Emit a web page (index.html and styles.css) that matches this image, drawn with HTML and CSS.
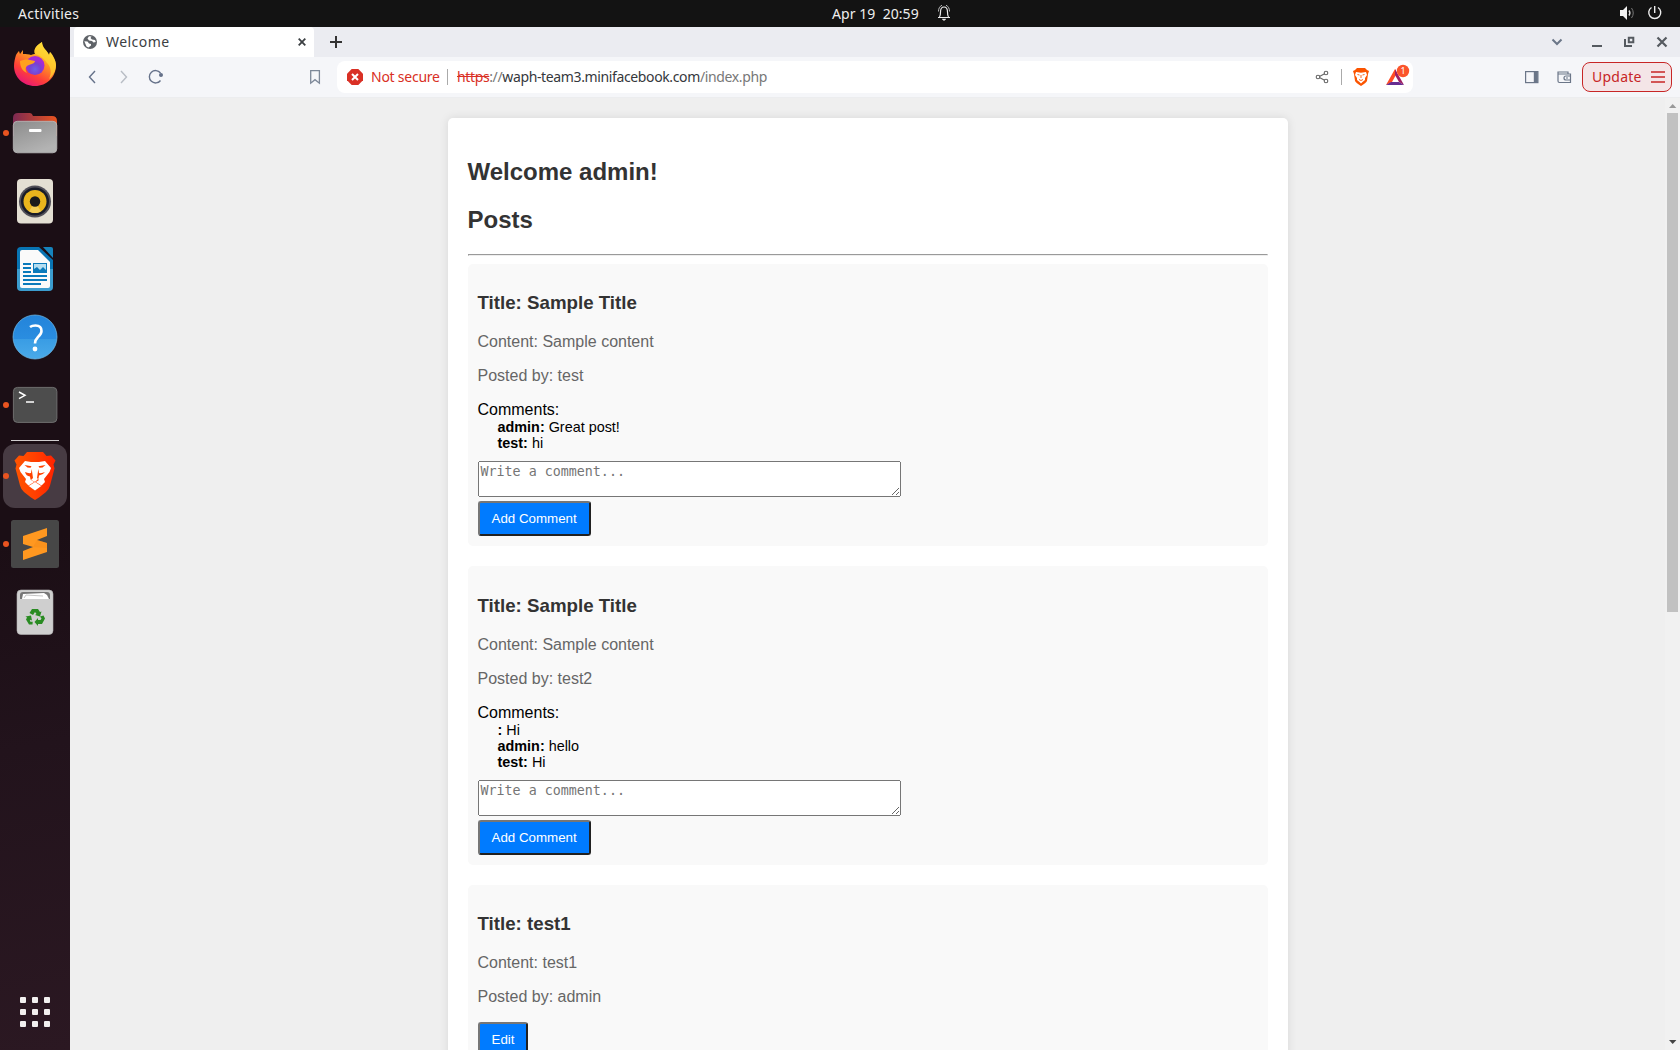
FILE: index.html
```html
<!DOCTYPE html>
<html lang="en">
<head>
<meta charset="utf-8">
<title>Welcome</title>
<link rel="stylesheet" href="styles.css">
</head>
<body>
<header class="topbar">
  <span class="activities">Activities</span>
  <span class="clock">Apr 19&nbsp; 20:59</span>
  <svg class="bell" viewBox="936 4 16 18" width="16" height="18" fill="none" stroke="#eee"><path d="M938 17.500h12M939.500 17q1-1.500 1-5c0-3.500 1.300-5 3.500-5s3.500 1.500 3.500 5q0 3.500 1 5" stroke-width="1.200"/><path d="M938.500 11.500c0-3 1-5 3.500-6.300M949.500 11.500c0-3-1-5-3.500-6.300" stroke="#bbb"/><path d="M942.500 19.300h3l-1.500 1z" fill="#eee"/></svg>
  <svg class="status" viewBox="1618 4 50 18" width="50" height="18" fill="none"><path d="M1620 10h3l4-4v14l-4-4h-3z" fill="#f2f2f2"/><path d="M1629 10.500q1.800 2.500 0 5" stroke="#ddd" stroke-width="1.400"/><path d="M1631.500 8q3.500 5 0 10" stroke="#777"/><path d="M1651.500 7.500a6 6 0 1 0 6.500 0M1654.700 6v7" stroke="#eee" stroke-width="1.400"/></svg>
</header>
<div class="desktop">
  <nav class="dock">
    <svg class="app" viewBox="0 31 70 68">
      <defs>
        <linearGradient id="fx" x1=".8" y1="0" x2=".25" y2="1"><stop offset="0" stop-color="#fff44f"/><stop offset=".4" stop-color="#ff9a22"/><stop offset=".72" stop-color="#ff4038"/><stop offset="1" stop-color="#e5127d"/></linearGradient>
        <radialGradient id="fxg" cx=".5" cy=".7"><stop offset="0" stop-color="#6c60e8"/><stop offset=".6" stop-color="#7a40d0"/><stop offset="1" stop-color="#a52bd5"/></radialGradient>
      </defs>
      <path d="M16 55c1-2 2-3 3-4l1 3 3-4v4c3 0 6 0 8 1 2-1 3-1 4-1-2-5 2-9 7-12 0 6 5 8 7 13l1-3c3 3 6 9 6 13 0 12-9 21-21 21S14 77 14 66c0-4 1-8 2-11z" fill="url(#fx)"/>
      <path d="M42 42c0 6 5 8 7 13l1-3c3 3 6 9 6 13 0 5-3 11-7 14 3-6 2-12-2-16-3-5-8-8-12-9-2-5 2-9 7-12z" fill="#ffd930" fill-opacity=".7"/>
      <circle cx="35" cy="65.500" r="9.500" fill="url(#fxg)"/>
      <path d="M20 61c3-1 7-2 10-1l5 1c0 2-3 3-6 4-4 1-4 5-2 8-5-2-7-7-7-12z" fill="#ffa01e"/>
    </svg>
    <svg class="app" viewBox="0 99 70 68">
      <defs><linearGradient id="fa"><stop offset="0" stop-color="#7d2952"/><stop offset="1" stop-color="#e95420"/></linearGradient><linearGradient id="fb" x2=".5" y2="1"><stop offset="0" stop-color="#8c8c8c"/><stop offset="1" stop-color="#b3b3b3"/></linearGradient></defs>
      <path d="M13 118q0-5 5-5h12q2 0 3 3h19q5 0 5 5v15H13z" fill="url(#fa)"/><rect x="13.300" y="121.300" width="43.500" height="31.500" rx="4" fill="url(#fb)" stroke="#bbb" stroke-width=".8"/><rect x="29" y="129" width="12.500" height="3" rx="1" fill="#fff"/><circle cx="6" cy="133" r="3" fill="#e95420"/>
    </svg>
    <svg class="app" viewBox="0 167 70 68">
      <rect x="17" y="179" width="36" height="44.500" rx="4" fill="#e4dfd3"/><circle cx="35" cy="201.500" r="16" fill="#514f58"/><circle cx="35" cy="201.500" r="14" fill="#191c29"/><circle cx="35" cy="201.500" r="11.500" fill="#eab51d"/><path d="M35 201.500l-6 10q6 3 12 0z" fill="#f8df80" opacity=".6"/><circle cx="35" cy="201.500" r="5.200" fill="#1b1b1b"/>
    </svg>
    <svg class="app" viewBox="0 235 70 68">
      <defs><linearGradient id="wr" x2="0" y2="1"><stop offset=".5" stop-color="#0874b3"/><stop offset=".5" stop-color="#3b9cce"/></linearGradient></defs>
      <path d="M17 251q0-4 4-4h18l14 13v27q0 4-4 4H21q-4 0-4-4z" fill="url(#wr)"/><path d="M20 252q0-2 2-2h16l12 12v24q0 2-2 2H22q-2 0-2-2z" fill="#fafafa"/><path d="M43 247h8q2 0 2 2v9z" fill="#1684bd"/><path d="M23 264h8M23 268h8M23 272h8M23 276h24M23 280h24M23 284h18" stroke="#0a7abb" stroke-width="2"/><rect x="33.500" y="263.500" width="13" height="9" fill="#b5def1" stroke="#0a7abb"/><path d="M34 272v-3l3-2 3 3 3-3 3 3v2z" fill="#0a7abb"/>
    </svg>
    <svg class="app" viewBox="0 303 70 68">
      <defs><linearGradient id="hp" x2="0" y2="1"><stop offset="0" stop-color="#2384da"/><stop offset=".54" stop-color="#2a8de0"/><stop offset=".54" stop-color="#399ce4"/><stop offset="1" stop-color="#4aaae9"/></linearGradient></defs>
      <circle cx="35" cy="337" r="22" fill="url(#hp)" stroke="#71bdeb" stroke-width=".7"/><path d="M30 327q2-1.500 5.500-1.500 6 0 6 5.500 0 3-3.500 6-3 3-3 6.500" fill="none" stroke="#fff" stroke-width="2.600"/><circle cx="35" cy="349" r="2.400" fill="#fff"/>
    </svg>
    <svg class="app" viewBox="0 371 70 68">
      <rect x="13.400" y="387.400" width="43.500" height="35" rx="4" fill="#4d4d4d" stroke="#747474" stroke-width=".9"/><path d="M19 392l6 3.300-6 3.300M26 402h8" fill="none" stroke="#fff" stroke-width="1.500"/><circle cx="6" cy="405" r="3" fill="#e95420"/>
    </svg>
    <div class="separator"></div>
    <svg class="app" viewBox="0 442 70 68">
      <defs><linearGradient id="br"><stop offset="0" stop-color="#ff5500"/><stop offset=".5" stop-color="#ff4000"/><stop offset="1" stop-color="#ff2200"/></linearGradient></defs>
      <rect x="3" y="444" width="64" height="64" rx="12" fill="#473b43"/>
      <path d="M27 452h16l3.500 4 4.500-.5 4.500 5-2 4 1 4-4.500 17q-1 4-4 6.500l-7 5.500-4 2.500-4-2.500-7-5.500q-3-2.500-4-6.500l-4.500-17 1-4-2-4 4.500-5 4.500.5z" fill="url(#br)"/>
      <path d="M25 461l6 1h8l6-1 6 7-1.500 4-5.500 7 1 3-3.500 3.500-6.500-4-6.500 4-3.500-3.500 1-3-5.500-7L19 468z" fill="#fff"/>
      <path d="M24.500 465l7 1.300-1 1.500-3-.3zM45.500 465l-7 1.300 1 1.500 3-.3zM25 472q3 1.500 6 1l.7-4 1.300 9-2 2 4 2.500 4-2.500-2-2 1.300-9 .7 4q3 .5 6-1-2 3-6 3.500l-.5 3L35 482l-4.500-2.500-.500-3q-4-.5-5-4.500z" fill="#ff4200"/>
      <path d="M35 482l6.300 4-6.300 4.500-6.300-4.500z" fill="#fff"/><circle cx="6" cy="476" r="3" fill="#e95420"/>
    </svg>
    <svg class="app" viewBox="0 510 70 68">
      <rect x="11" y="520" width="48" height="48" rx="2.500" fill="#474747"/><path d="M47 528v8l-10 4 10 3v9l-24 8v-9l10-4-10-3v-8z" fill="#ff9820"/><path d="M33 547l4-7 10 3v5z" fill="#ef8514" opacity=".3"/><circle cx="6" cy="544" r="3" fill="#e95420"/>
    </svg>
    <svg class="app" viewBox="0 578 70 68">
      <rect x="17" y="590" width="36" height="44.500" rx="4" fill="#cfcfcf" stroke="#b4b4b4" stroke-width=".6"/><path d="M20 599v-4q0-3 3-3h24q3 0 3 3v4z" fill="#777"/><path d="M22 599l1-5 21-1 3 2 2 4z" fill="#fff"/><path d="M24 598l2-3 17 1" fill="none" stroke="#aaa" stroke-width=".7"/>
      <g fill="#298b22"><path d="M32 609h6l2 3 1.500-.5-1.500 5-5-1.500 1.500-1-1.500-2-2 3-3.500-2z"/><path d="M43.500 615.500l1.500 3-3 5.500h-4v2l-3.500-4 3.500-4v2h2.500l1-1.500-1.500-2z"/><path d="M32.500 624.500h-3.500l-3-5 1-2-1.500-1 5.500-1 1 5-1.500-.8-.7 1 .7 1h2.200z"/></g>
    </svg>
    <svg class="launcher" viewBox="20 997 30 30" fill="#f2f0ef"><g id="dots"><rect x="20" y="997" width="6" height="6" rx="1"/><rect x="32" y="997" width="6" height="6" rx="1"/><rect x="44" y="997" width="6" height="6" rx="1"/></g><use href="#dots" y="12"/><use href="#dots" y="24"/></svg>
  </nav>
  <main class="browser">
    <div class="tabs">
      <div class="tab">
        <svg class="globe" viewBox="0 0 14 14"><circle cx="7" cy="7" r="7" fill="#5f6368"/><path d="M1.300 6.200l3.200.3 1.500 2 2 .5v1.500l-2.500 2-2-1zM6 1.300l2.500.2-1 1.500 1.500 1.500 3 .500.800 2-2.300.5-1.500-1.500-3-.500-1.500-2z" fill="#fff"/></svg>
        <span class="tab-title">Welcome</span>
        <svg class="tab-close" viewBox="0 0 8 8" stroke="#3c4043" stroke-width="1.800"><path d="M.7.7l6.600 6.600M7.300.7L.7 7.300"/></svg>
      </div>
      <svg class="plus" viewBox="0 0 12 12" stroke="#333" stroke-width="2"><path d="M6 0v12M0 6h12"/></svg>
      <svg class="window-buttons" viewBox="1550 34 120 16" fill="none"><path d="M1552.500 39.500l4.500 4.500 4.500-4.500" stroke="#6b7688" stroke-width="2"/><path d="M1592 46h10" stroke="#555a60" stroke-width="2"/><path d="M1625 39v7h7M1628.800 37.800h4.500v4.500h-4.500z" stroke="#555a60" stroke-width="2"/><path d="M1657.500 37.500l9 9M1666.500 37.500l-9 9" stroke="#555a60" stroke-width="2.200"/></svg>
    </div>
    <div class="toolbar">
      <svg class="nav-icons" viewBox="86 67 80 20" fill="none" stroke="#66728a" stroke-width="1.400"><path d="M95 71l-5.500 6 5.500 6"/><path d="M121 71l5.500 6-5.500 6" stroke="#b8bdc5"/><path d="M160.500 80.500a6.200 6.200 0 1 1 0-7.500"/><circle cx="161" cy="75" r="1.300" fill="#66728a"/></svg>
      <svg class="bookmark" viewBox="309 69 12 16" fill="none" stroke="#7d8898" stroke-width="1.300"><path d="M310.700 70.700h8.700v12.500l-4.400-3.500-4.300 3.500z"/></svg>
      <div class="address">
        <svg class="danger" viewBox="0 0 16 16"><path d="M4.700 0h6.600L16 4.700v6.600L11.300 16H4.700L0 11.300V4.700z" fill="#d93025"/><path d="M5 5l6 6M11 5l-6 6" stroke="#fff" stroke-width="2"/></svg>
        <span class="insecure">Not secure</span>
        <span class="bar"></span>
        <span class="url"><s>https</s><i>://</i>waph-team3.minifacebook.com<i>/index.php</i></span>
        <svg class="address-icons" viewBox="1314 62 96 30" fill="none">
          <g stroke="#666" stroke-width="1.100"><path d="M1318.500 77l7.500-4M1318.500 77l7.500 4"/><g fill="#fff"><circle cx="1318" cy="77" r="1.800"/><circle cx="1326" cy="73" r="1.800"/><circle cx="1326" cy="81" r="1.800"/></g></g>
          <path d="M1341.500 69v16" stroke="#aaa"/>
          <path d="M1357 68h8l2 2 2 1-1 3-1 7q-1 2-6 5-5-3-6-5l-1-7-1-3 2-1z" fill="#fb5400"/><path d="M1356 72l5 .8 5-.8 1 3-2 3v2l-2.500 2-1.500 1.500-1.500-1.500-2.500-2v-2l-2-3z" fill="#fff"/><path d="M1357.500 74.500l2 .5M1364.500 74.500l-2 .5M1361 75v3M1359 79.500l2 1 2-1" stroke="#fb5400" stroke-width=".9"/>
          <path d="M1386 85l9-16 2 4-5 9z" fill="#ff4b25"/><path d="M1395 69l9 16-5-3-4-7z" fill="#9e1f63"/><path d="M1386 85l5-3h8l5 3z" fill="#662d91"/><circle cx="1403" cy="71" r="6.200" fill="#fb542b"/><text x="1403" y="74" text-anchor="middle" class="badge-text">1</text>
        </svg>
      </div>
      <svg class="side-icons" viewBox="1523 68 50 18" fill="none" stroke="#6b7688" stroke-width="1.200"><rect x="1525.600" y="71.600" width="12.300" height="11"/><path d="M1535.800 71.600v11" stroke-width="4"/><path d="M1568 74v-2h-10v9q0 1.500 1.500 1.500h11V74H1558M1571 76h-5q-2 0-2 2t2 2h5M1566 78h2"/></svg>
      <div class="update"><span>Update</span><svg viewBox="0 0 14 12" width="14" height="12" stroke="#c72626" stroke-width="1.300"><path d="M0 1h14M0 6h14M0 11h14"/></svg></div>
    </div>
    <div class="viewport">
      <div class="page">
        <div class="container">
          <h2>Welcome admin!</h2>
          <h2>Posts</h2>
          <hr>
          <div class="post">
            <h3>Title: Sample Title</h3>
            <p>Content: Sample content</p>
            <p>Posted by: test</p>
            <div>Comments:</div>
            <div class="comment"><b>admin:</b> Great post!</div>
            <div class="comment"><b>test:</b> hi</div>
            <form><textarea placeholder="Write a comment..."></textarea><br><button type="button">Add Comment</button></form>
          </div>
          <div class="post">
            <h3>Title: Sample Title</h3>
            <p>Content: Sample content</p>
            <p>Posted by: test2</p>
            <div>Comments:</div>
            <div class="comment"><b>:</b> Hi</div>
            <div class="comment"><b>admin:</b> hello</div>
            <div class="comment"><b>test:</b> Hi</div>
            <form><textarea placeholder="Write a comment..."></textarea><br><button type="button">Add Comment</button></form>
          </div>
          <div class="post">
            <h3>Title: test1</h3>
            <p>Content: test1</p>
            <p>Posted by: admin</p>
            <button type="button">Edit</button>
          </div>
        </div>
      </div>
      <div class="scrollbar">
        <svg viewBox="0 0 15 15" width="15" height="15"><path d="M4 10l3.700-4 3.700 4z" fill="#999"/></svg>
        <div class="thumb"></div>
        <svg class="down" viewBox="0 0 15 15" width="15" height="15"><path d="M4 5l3.700 4 3.700-4z" fill="#444"/></svg>
      </div>
    </div>
  </main>
</div>
</body>
</html>
```
FILE: styles.css
```css
* { box-sizing: border-box; }
body { margin: 0; height: 1050px; overflow: hidden; display: flex; flex-direction: column; font-family: "Noto Sans", sans-serif; font-size: 14px; }
svg { display: block; flex: none; }

.topbar { height: 27px; flex: none; background: #131313; color: #eee; display: flex; align-items: center; white-space: nowrap; padding-bottom: 1px; }
.activities { width: 814px; padding-left: 18px; letter-spacing: .3px; }
.clock { width: 124px; padding-left: 18px; letter-spacing: .05px; }
.bell { margin-left: -2px; }
.status { margin-left: auto; margin-right: 12px; }

.desktop { flex: 1; min-height: 0; display: flex; }
.dock { width: 70px; flex: none; padding: 4px 0 23px; display: flex; flex-direction: column; background: linear-gradient(170deg, #1b0e15 50%, #22131c 70%, #2b1822); }
.app { width: 70px; height: 68px; }
.separator { height: 3px; margin: 0 11px; padding-top: 1px; background: #cfcbcd content-box; padding-bottom: 1px; flex: none; }
.launcher { width: 30px; height: 30px; margin: auto 20px 0; }

.browser { flex: 1; min-width: 0; display: flex; flex-direction: column; }
.tabs { height: 30px; flex: none; display: flex; align-items: center; background: #ebecf1; padding: 0 10px 0 4px; }
.tab { width: 240px; height: 30px; background: #fff; border-radius: 4px 4px 0 0; display: flex; align-items: center; padding: 0 8px 0 9px; }
.globe { width: 14px; height: 14px; }
.tab-title { margin-left: 9px; color: #3c4043; letter-spacing: .45px; padding-bottom: 2px; }
.tab-close { width: 8px; height: 8px; margin-left: auto; }
.plus { width: 12px; height: 12px; margin-left: 16px; }
.window-buttons { width: 120px; height: 16px; margin-left: auto; }

.toolbar { height: 41px; flex: none; display: flex; align-items: center; background: #f5f6f9; border-bottom: 1px solid #ecedef; padding: 0 8px 0 16px; }
.nav-icons { width: 80px; height: 20px; }
.bookmark { width: 12px; height: 16px; margin-left: 143px; }
.address { width: 1076px; height: 32px; margin-left: 16px; background: #fff; border-radius: 8px; display: flex; align-items: center; padding: 0 3px 0 10px; white-space: nowrap; }
.danger { width: 16px; height: 16px; }
.insecure { width: 76px; margin-left: 8px; color: #d93025; letter-spacing: -.25px; padding-bottom: 2px; }
.bar { width: 1px; height: 16px; background: #aaa; }
.url { margin-left: 9px; color: #35383c; letter-spacing: -.37px; padding-bottom: 2px; }
.url i { font-style: normal; color: #777; }
.url s { color: #d93025; }
.address-icons { width: 96px; height: 30px; margin-left: auto; }
.badge-text { font: 9px "Noto Sans", sans-serif; fill: #fff; }
.side-icons { width: 50px; height: 18px; margin-left: 110px; }
.update { width: 90px; height: 30px; margin-left: auto; border: 1px solid #c72626; border-radius: 8px; background: #f4e5e7; color: #c72626; display: flex; align-items: center; justify-content: space-between; padding: 0 6px 0 9px; letter-spacing: .25px; }
.update span { padding-bottom: 2px; }

.viewport { flex: 1; min-height: 0; display: flex; background: #efefef; }
.page { flex: 1; overflow: hidden; padding-top: 20px; font: 16px "Liberation Sans", Arial, sans-serif; color: #000; }
.container { width: 840px; height: 1300px; margin: 0 auto; padding: 20px; display: flow-root; background: #fff; border-radius: 5px; box-shadow: 0 0 10px rgba(0, 0, 0, .1); }
h2, h3 { color: #333; }
.post { padding: 10px; margin-bottom: 20px; background: #f9f9f9; border-radius: 5px; display: flow-root; }
.post p { color: #666; }
.comment { margin-left: 20px; font-size: 14.4px; }
form { margin-top: 10px; }
textarea { width: 423px; height: 36px; font: 13.333px "DejaVu Sans Mono", monospace; }
button { padding: 8px 12px; font: 13.333px "Liberation Sans", Arial, sans-serif; color: #fff; background: #007bff; border: 2px solid; border-color: #767676 #212121 #212121 #767676; border-radius: 3px; height: 35px; }

.scrollbar { width: 15px; flex: none; background: #f1f1f1; display: flex; flex-direction: column; }
.thumb { width: 11px; height: 499px; margin-left: 2px; background: #c1c1c1; }
.down { margin-top: auto; }
```
